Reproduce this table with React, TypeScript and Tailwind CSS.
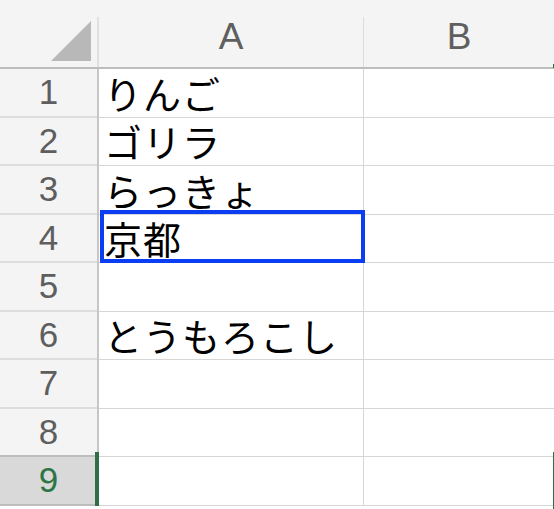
import React from 'react';

const rows = ['りんご', 'ゴリラ', 'らっきょ', '京都', '', 'とうもろこし', '', '', ''];
const selectedRow = 9;
const activeCell = 4;

const App: React.FC = () => {
  return (
    <div className="relative w-[554px] h-[509px] overflow-hidden bg-white" style={{ fontFamily: '"Liberation Sans", Arial, sans-serif' }}>
      {/* Column headers */}
      <div className="flex h-[69px] bg-[#f4f4f4] border-b-2 border-[#bdbdbd]">
        <div className="w-[97px] shrink-0 flex items-end justify-end pb-[6px] pr-[6px]">
          <svg width="40" height="40" viewBox="0 0 40 40">
            <polygon points="0,40 40,40 40,0" fill="#b8b8b8" />
          </svg>
        </div>
        <div className="w-[2px] shrink-0 mt-[17px] bg-[#e0e0e0]" />
        <div className="w-[264px] shrink-0 flex items-center justify-center text-[37px] leading-[42px] text-[#5f5f5f] pt-[6px]">A</div>
        <div className="w-px shrink-0 mt-[17px] bg-[#dcdcdc]" />
        <div className="flex-1 flex items-center justify-center text-[37px] leading-[42px] text-[#5f5f5f] pt-[6px]">B</div>
      </div>

      {/* Rows */}
      {rows.map((text, i) => {
        const n = i + 1;
        const selected = n === selectedRow;
        const beforeSelected = n === selectedRow - 1;
        return (
          <div key={n} className="flex h-[48.5px]">
            <div
              className={
                'relative w-[99px] shrink-0 border-r-2 border-[#c6c6c6] ' +
                (selected ? 'bg-[#d9d9d9]' : 'bg-[#f4f4f4]')
              }
            >
              <div
                className={
                  'h-full flex items-center justify-center text-[35px] leading-[40px] border-b-2 ' +
                  (selected || beforeSelected ? 'border-[#bdbdbd] ' : 'border-[#dddddd] ') +
                  (selected ? 'text-[#2e7546]' : 'text-[#5e5e5e]')
                }
              >
                {n}
              </div>
              {selected && (
                <div className="absolute -right-[2px] -top-[5px] bottom-0 w-[4px] bg-[#2f6f46]" />
              )}
            </div>
            <div
              className="relative w-[265px] shrink-0 border-r border-b border-[#d6d6d6] pl-[5px] flex items-center text-[38px] leading-[44px] tracking-[1px] text-black whitespace-nowrap"
              style={{ fontFamily: '"Noto Sans CJK JP", sans-serif' }}
            >
              {text}
              {n === activeCell && (
                <div className="absolute left-[1px] -right-[2px] -top-[4.5px] -bottom-[1px] border-[4px] border-[#0b3ef2]" />
              )}
            </div>
            <div className="flex-1 border-b border-[#d6d6d6]" />
          </div>
        );
      })}

      {/* selection edge markers on the right */}
      <div className="absolute right-0 top-[64px] h-[4px] w-px bg-[#2f6f46]" />
      <div className="absolute right-0 top-[452px] bottom-0 w-px bg-[#2f6f46]" />
    </div>
  );
};

export default App;
